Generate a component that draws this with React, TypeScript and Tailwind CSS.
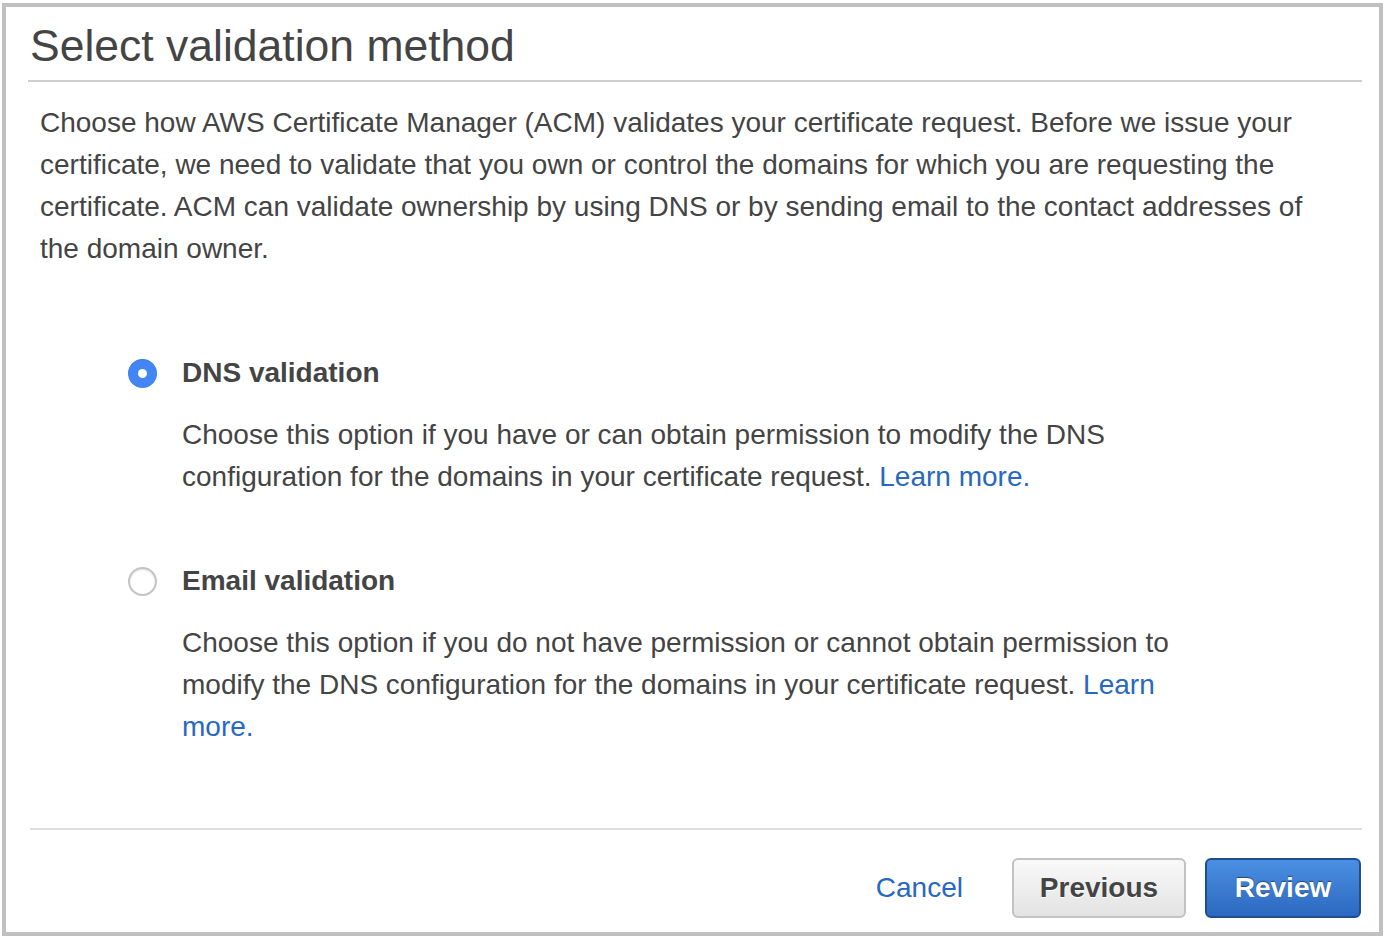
import { useState } from 'react';

type Method = 'dns' | 'email';

function Radio({ checked, onClick }: { checked: boolean; onClick: () => void }) {
  return (
    <button
      type="button"
      onClick={onClick}
      className={
        checked
          ? 'w-[29px] h-[29px] rounded-full bg-[#4285f4] flex items-center justify-center shadow-[inset_0_1px_1px_rgba(0,0,0,0.08)]'
          : 'w-[29px] h-[29px] rounded-full bg-white border-2 border-[#c4c4c4] shadow-[inset_0_1px_2px_rgba(0,0,0,0.12)]'
      }
    >
      {checked && <span className="block w-[9px] h-[9px] rounded-full bg-white" />}
    </button>
  );
}

export default function App() {
  const [method, setMethod] = useState<Method>('dns');

  return (
    <div className="w-[1391px] h-[945px] bg-white pt-[3px] pl-[2px] font-['Liberation_Sans',Arial,sans-serif] text-[#444]">
      <div className="w-[1381px] h-[933px] border-4 border-[#c0c0c0] pl-[24px] pr-[17px] flex flex-col">
        <h1 className="mt-[12px] pb-[7px] border-b-2 border-[#cfcfcf] text-[44.5px] leading-[54px] font-normal text-[#444] -ml-[2px] pl-[2px]">
          Select validation method
        </h1>

        <p className="mt-[20px] pl-[10px] w-[1315px] text-[28px] leading-[42px] text-[#444]">
          Choose how AWS Certificate Manager (ACM) validates your certificate request. Before we issue your
          certificate, we need to validate that you own or control the domains for which you are requesting the
          certificate. ACM can validate ownership by using DNS or by sending email to the contact addresses of
          the domain owner.
        </p>

        <div className="mt-[82px] pl-[98px]">
          <div className="flex">
            <div className="w-[54px] h-[42px] flex items-center">
              <Radio checked={method === 'dns'} onClick={() => setMethod('dns')} />
            </div>
            <div className="w-[1030px]">
              <div className="text-[28px] leading-[42px] font-bold text-[#444]">DNS validation</div>
              <p className="mt-[20px] text-[28px] leading-[42px]">
                Choose this option if you have or can obtain permission to modify the DNS configuration for the
                domains in your certificate request.{' '}
                <a href="#" className="text-[#2768c0]">
                  Learn more.
                </a>
              </p>
            </div>
          </div>

          <div className="flex mt-[62px]">
            <div className="w-[54px] h-[42px] flex items-center">
              <Radio checked={method === 'email'} onClick={() => setMethod('email')} />
            </div>
            <div className="w-[1030px]">
              <div className="text-[28px] leading-[42px] font-bold text-[#444]">Email validation</div>
              <p className="mt-[20px] text-[28px] leading-[42px]">
                Choose this option if you do not have permission or cannot obtain permission to modify the DNS
                configuration for the domains in your certificate request.{' '}
                <a href="#" className="text-[#2768c0]">
                  Learn more.
                </a>
              </p>
            </div>
          </div>
        </div>

        <div className="mt-auto mb-[14px] border-t-2 border-[#dddddd] pt-[28px] flex items-center justify-end">
          <a href="#" className="text-[28px] text-[#2768c0] mr-[49px]">
            Cancel
          </a>
          <button className="w-[174px] h-[60px] rounded-[6px] border-2 border-[#c2c2c2] bg-gradient-to-b from-[#f9f9f9] to-[#e3e3e3] text-[28px] font-bold text-[#444] [text-shadow:0_1px_0_#fff] mr-[19px]">
            Previous
          </button>
          <button className="w-[156px] h-[60px] rounded-[6px] border-2 border-[#1f4e8f] bg-gradient-to-b from-[#4a90e2] to-[#2d68c0] text-[28px] font-bold text-white [text-shadow:0_-1px_1px_rgba(0,0,0,0.45)] mr-[1px]">
            Review
          </button>
        </div>
      </div>
    </div>
  );
}
